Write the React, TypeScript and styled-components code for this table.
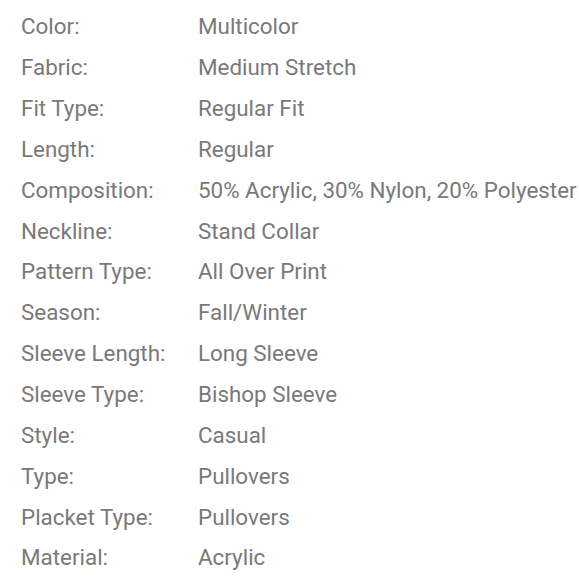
import React from 'react';
import styled, { createGlobalStyle } from 'styled-components';

const GlobalStyle = createGlobalStyle`
  body {
    margin: 0;
    background: #ffffff;
    font-family: Roboto, "Liberation Sans", sans-serif;
  }
`;

const Specs = [
  { label: 'Color:', value: 'Multicolor' },
  { label: 'Fabric:', value: 'Medium Stretch' },
  { label: 'Fit Type:', value: 'Regular Fit' },
  { label: 'Length:', value: 'Regular' },
  { label: 'Composition:', value: '50% Acrylic, 30% Nylon, 20% Polyester' },
  { label: 'Neckline:', value: 'Stand Collar' },
  { label: 'Pattern Type:', value: 'All Over Print' },
  { label: 'Season:', value: 'Fall/Winter' },
  { label: 'Sleeve Length:', value: 'Long Sleeve' },
  { label: 'Sleeve Type:', value: 'Bishop Sleeve' },
  { label: 'Style:', value: 'Casual' },
  { label: 'Type:', value: 'Pullovers' },
  { label: 'Placket Type:', value: 'Pullovers' },
  { label: 'Material:', value: 'Acrylic' },
];

const SpecList = styled.dl`
  margin: 0;
  padding: 6px 0 0 21px;
  display: grid;
  grid-template-columns: 177px 1fr;
  grid-auto-rows: 40.85px;
  align-items: center;
  color: #797979;
  font-size: 22.4px;
  white-space: nowrap;
`;

const Label = styled.dt`
  margin: 0;
`;

const Value = styled.dd`
  margin: 0;
`;

function App() {
  return (
    <>
      <GlobalStyle />
      <SpecList>
        {Specs.map(spec => (
          <React.Fragment key={spec.label}>
            <Label>{spec.label}</Label>
            <Value>{spec.value}</Value>
          </React.Fragment>
        ))}
      </SpecList>
    </>
  );
}

export default App;
